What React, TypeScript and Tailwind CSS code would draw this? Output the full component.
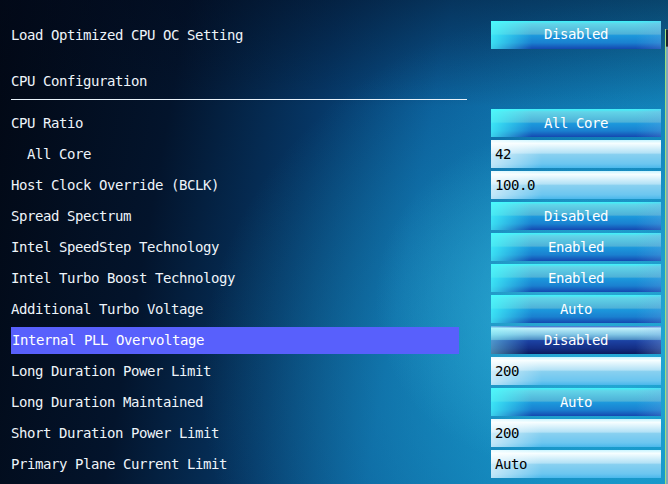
type Control = "option" | "value";

type Row = {
  label: string;
  value: string;
  kind: Control;
  indent?: boolean;
  active?: boolean;
};

const rows: Row[] = [
  { label: "CPU Ratio", value: "All Core", kind: "option" },
  { label: "All Core", value: "42", kind: "value", indent: true },
  { label: "Host Clock Override (BCLK)", value: "100.0", kind: "value" },
  { label: "Spread Spectrum", value: "Disabled", kind: "option" },
  { label: "Intel SpeedStep Technology", value: "Enabled", kind: "option" },
  { label: "Intel Turbo Boost Technology", value: "Enabled", kind: "option" },
  { label: "Additional Turbo Voltage", value: "Auto", kind: "option" },
  { label: "Internal PLL Overvoltage", value: "Disabled", kind: "option", active: true },
  { label: "Long Duration Power Limit", value: "200", kind: "value" },
  { label: "Long Duration Maintained", value: "Auto", kind: "option" },
  { label: "Short Duration Power Limit", value: "200", kind: "value" },
  { label: "Primary Plane Current Limit", value: "Auto", kind: "value" },
];

function OptionButton({ value, active }: { value: string; active?: boolean }) {
  return (
    <div
      className={
        active
          ? "flex h-[28px] w-[170px] items-center justify-center pb-[1px] text-white bg-[linear-gradient(to_right,rgba(140,255,255,0.45)_0%,rgba(140,255,255,0)_22%,rgba(0,0,0,0)_85%,rgba(150,190,240,0.3)_100%),linear-gradient(to_bottom,#2a5cc8_0%,#c0f0fa_8%,#84c8e6_30%,#4e90c6_48%,#1c42a4_52%,#142e84_80%,#0a1a5c_100%)]"
          : "flex h-[28px] w-[170px] items-center justify-center pb-[1px] text-white bg-[linear-gradient(to_right,rgba(70,255,255,0.75)_0%,rgba(70,255,255,0)_24%,rgba(0,0,0,0)_85%,rgba(120,170,230,0.25)_100%),linear-gradient(to_bottom,#3ef4fc_0%,#62d4e8_10%,#4eb2d8_46%,#1c98dc_52%,#1a80d0_78%,#1448b0_100%)]"
      }
    >
      {value}
    </div>
  );
}

function ValueField({ value }: { value: string }) {
  return (
    <div className="flex h-[28px] w-[170px] items-center pb-[1px] pl-[4px] text-black bg-[linear-gradient(to_right,rgba(255,255,255,0.6)_0%,rgba(255,255,255,0)_30%),linear-gradient(to_bottom,#c8f4ff_0%,#f6feff_12%,#b4e2f6_46%,#88d0f0_52%,#6cc6f0_85%,#4ab8ec_100%)]">
      {value}
    </div>
  );
}

function SettingRow({ row }: { row: Row }) {
  return (
    <div className="flex h-[28px] items-center">
      <div
        className={
          row.active
            ? "flex h-[27px] w-[448px] items-center pb-[1px] pl-[1px] text-white bg-[#5860fc]"
            : "flex h-[27px] w-[448px] items-center pb-[1px] text-[#eef4fa]"
        }
      >
        <span className={row.indent ? "pl-[16px]" : ""}>{row.label}</span>
      </div>
      <div className="ml-[32px]">
        {row.kind === "option" ? (
          <OptionButton value={row.value} active={row.active} />
        ) : (
          <ValueField value={row.value} />
        )}
      </div>
    </div>
  );
}

export default function App() {
  return (
    <div
      className="flex h-[484px] w-[668px] overflow-hidden text-[14px] tracking-[-0.43px] leading-none bg-[linear-gradient(to_bottom,rgba(2,10,28,0.45)_0%,rgba(2,10,28,0)_22%),radial-gradient(ellipse_180px_170px_at_555px_300px,rgba(60,190,225,0.55),rgba(60,190,225,0)_100%),radial-gradient(ellipse_420px_380px_at_620px_380px,rgba(30,170,215,0.8),rgba(30,170,215,0)_100%),linear-gradient(100deg,#020814_0%,#03142c_25%,#063766_45%,#0a5894_60%,#0c6ca8_80%,#1284bc_100%)]"
      style={{ fontFamily: '"DejaVu Sans Mono", "Liberation Mono", monospace' }}
    >
      <main className="w-[664px] pl-[11px] pt-[21px]">
        <div className="flex h-[28px] items-center pb-[1px]">
          <div className="w-[448px] text-[#eef4fa]">Load Optimized CPU OC Setting</div>
          <div className="ml-[32px]">
            <OptionButton value="Disabled" />
          </div>
        </div>

        <div className="mt-[18px] flex h-[28px] items-center pb-[1px] text-[#eef4fa]">CPU Configuration</div>
        <div className="mt-[4px] h-px w-[456px] bg-[#e8f2fa]" />

        <div className="mt-[9px] flex flex-col gap-[3px]">
          {rows.map((row) => (
            <SettingRow key={row.label + row.value} row={row} />
          ))}
        </div>
      </main>

      {/* scrollbar track along the right edge */}
      <div className="flex w-[4px] flex-col pl-[1px] pt-[29px]">
        <div className="flex flex-1 border-l border-[#9ee07c] bg-[#7fa6bc]">
          <div className="h-[18px] w-full rounded-[1px] border border-[#1a2230] bg-[#3a4a58]" />
        </div>
      </div>
    </div>
  );
}
